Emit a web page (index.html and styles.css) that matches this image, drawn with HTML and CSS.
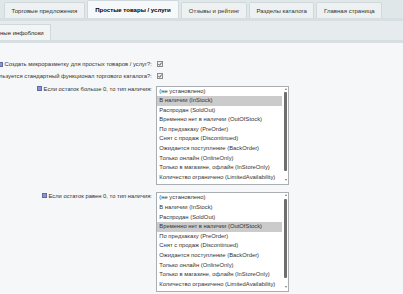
FILE: index.html
```html
<!DOCTYPE html>
<html lang="ru">
<head>
    <meta charset="UTF-8">
    <title>Микроразметка</title>
    <link rel="stylesheet" href="styles.css">
</head>
<body>
    <div class="tabs">
        <div class="tab">Торговые предложения</div>
        <div class="tab active">Простые товары / услуги</div>
        <div class="tab">Отзывы и рейтинг</div>
        <div class="tab">Разделы каталога</div>
        <div class="tab">Главная страница</div>
    </div>
    <div class="band"></div>
    <div class="subtabs">
        <div class="subtab">ные инфоблоки</div>
    </div>
    <div class="band"></div>

    <div class="content">
        <div class="row">
            <div class="label"><span class="hint"></span><span>Создать микроразметку для простых товаров / услуг?:</span></div>
            <div class="field">
                <span class="check"><svg width="6" height="6" viewBox="0 0 6 6"><rect x="0.5" y="0.5" width="5" height="5" fill="#eee" stroke="#8c8c8c"/><path d="M1.4 3.1 L2.6 4.3 L4.7 1.6" fill="none" stroke="#444" stroke-width="0.9"/></svg></span>
            </div>
        </div>
        <div class="row">
            <div class="label"><span>Используется стандартный функционал торгового каталога?:</span></div>
            <div class="field">
                <span class="check"><svg width="6" height="6" viewBox="0 0 6 6"><rect x="0.5" y="0.5" width="5" height="5" fill="#eee" stroke="#8c8c8c"/><path d="M1.4 3.1 L2.6 4.3 L4.7 1.6" fill="none" stroke="#444" stroke-width="0.9"/></svg></span>
            </div>
        </div>
        <div class="row row-list">
            <div class="label"><span class="hint"></span><span>Если остаток больше 0, то тип наличия:</span></div>
            <div class="field">
                <div class="listbox">
                    <div class="options">
                        <div class="option">(не установлено)</div>
                        <div class="option selected">В наличии (InStock)</div>
                        <div class="option">Распродан (SoldOut)</div>
                        <div class="option">Временно нет в наличии (OutOfStock)</div>
                        <div class="option">По предзаказу (PreOrder)</div>
                        <div class="option">Снят с продаж (Discontinued)</div>
                        <div class="option">Ожидается поступление (BackOrder)</div>
                        <div class="option">Только онлайн (OnlineOnly)</div>
                        <div class="option">Только в магазине, офлайн (InStoreOnly)</div>
                        <div class="option">Количество ограничено (LimitedAvailability)</div>
                    </div>
                    <div class="scrollbar"><span class="arrow-up"></span><span class="thumb"></span><span class="arrow-down"></span></div>
                </div>
            </div>
        </div>
        <div class="row row-list">
            <div class="label"><span class="hint"></span><span>Если остаток равен 0, то тип наличия:</span></div>
            <div class="field">
                <div class="listbox">
                    <div class="options">
                        <div class="option">(не установлено)</div>
                        <div class="option">В наличии (InStock)</div>
                        <div class="option">Распродан (SoldOut)</div>
                        <div class="option selected">Временно нет в наличии (OutOfStock)</div>
                        <div class="option">По предзаказу (PreOrder)</div>
                        <div class="option">Снят с продаж (Discontinued)</div>
                        <div class="option">Ожидается поступление (BackOrder)</div>
                        <div class="option">Только онлайн (OnlineOnly)</div>
                        <div class="option">Только в магазине, офлайн (InStoreOnly)</div>
                        <div class="option">Количество ограничено (LimitedAvailability)</div>
                    </div>
                    <div class="scrollbar"><span class="arrow-up"></span><span class="thumb"></span><span class="arrow-down"></span></div>
                </div>
            </div>
        </div>
    </div>
</body>
</html>
```

FILE: styles.css
```css
body {
    margin: 0;
    font-family: "Liberation Sans", Arial, sans-serif;
    font-size: 5.85px;
    color: #333;
    background-color: #f5f7f8;
    overflow: hidden;
}
.tabs {
    display: flex;
    align-items: flex-end;
    gap: 2px;
    height: 18px;
    padding-left: 4px;
    background-color: #e0e7e9;
    font-size: 6.05px;
}
.tab {
    height: 16px;
    line-height: 16px;
    padding: 0 6.5px;
    box-sizing: border-box;
    background-color: #edf1f2;
    border: 1px solid #d0d8db;
    border-bottom: none;
    border-radius: 2px 2px 0 0;
    white-space: nowrap;
}
.tab.active {
    height: 18px;
    line-height: 18px;
    padding: 0 7.5px;
    background-color: #f6f9f9;
    color: #000;
    font-weight: bold;
}
.band {
    height: 3px;
    background-color: #d8dfe2;
}
.subtabs {
    display: flex;
    align-items: flex-end;
    height: 19px;
    background-color: #e6ebed;
}
.subtab {
    height: 16px;
    line-height: 16px;
    padding: 0 6px 0 0;
    box-sizing: border-box;
    background-color: #f2f5f6;
    border: 1px solid #d0d8db;
    border-left: none;
    border-bottom: none;
    white-space: nowrap;
    color: #222;
    font-size: 6px;
}
.content {
    padding-top: 15px;
}
.row {
    display: grid;
    grid-template-columns: 152px 1fr;
    column-gap: 4px;
    height: 12px;
}
.row-list {
    height: auto;
    margin-top: 3.5px;
}
.row-list + .row-list {
    margin-top: 7px;
}
.label {
    display: flex;
    justify-content: flex-end;
    align-items: center;
    gap: 1.5px;
    white-space: nowrap;
}
.row-list .label {
    align-items: flex-start;
    padding-top: 0.5px;
}
.hint {
    flex: none;
    width: 3px;
    height: 3px;
    background-color: #8a95cf;
    border: 1px solid #5f6aa6;
}
.field {
    display: flex;
    align-items: center;
}
.check {
    display: flex;
    margin-left: 1px;
}
.listbox {
    display: flex;
    width: 133px;
    box-sizing: border-box;
    background-color: #fff;
    border: 1px solid #a8aeb1;
    padding-bottom: 2px;
}
.options {
    width: 125px;
}
.option {
    height: 9.6px;
    line-height: 9.6px;
    padding-left: 2.3px;
    white-space: nowrap;
    color: #333;
}
.option.selected {
    background-color: #cbcbcb;
}
.scrollbar {
    flex: 1;
    display: flex;
    flex-direction: column;
    align-items: center;
    padding: 1px 0 0 1px;
}
.arrow-up, .arrow-down {
    width: 0;
    height: 0;
    border-left: 1.3px solid transparent;
    border-right: 1.3px solid transparent;
}
.arrow-up {
    border-bottom: 2px solid #777;
}
.arrow-down {
    border-top: 2px solid #777;
    margin-top: auto;
    margin-bottom: 1px;
}
.thumb {
    width: 2.4px;
    height: 79px;
    margin-top: 2.5px;
    background-color: #6e6e6e;
    border-radius: 1px;
}
```
